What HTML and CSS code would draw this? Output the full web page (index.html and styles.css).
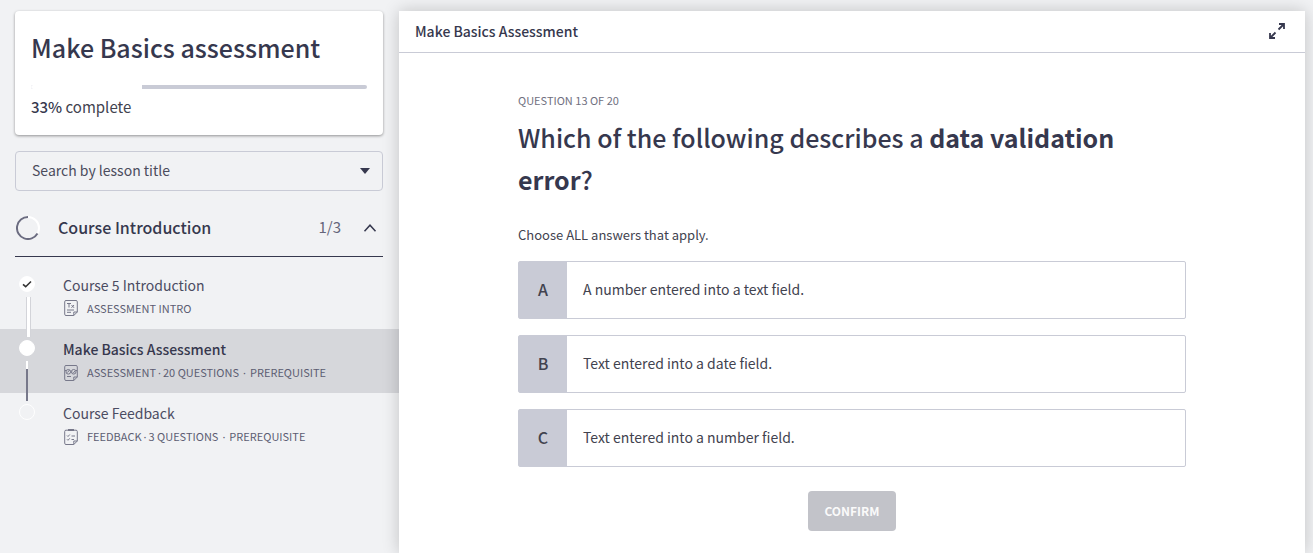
FILE: index.html
```html
<!DOCTYPE html>
<html lang="en">
<head>
<meta charset="utf-8">
<title>Make Basics Assessment</title>
<meta name="viewport" content="width=device-width, initial-scale=1">
<link rel="stylesheet" href="styles.css">
</head>
<body>
<div class="layout">
  <aside class="sidebar">
    <section class="course-card">
      <h1 class="course-title">Make Basics assessment</h1>
      <progress class="course-progress" id="course-progress" max="100" value="33"></progress>
      <label class="course-status" for="course-progress"><strong>33%</strong> complete</label>
    </section>

    <div class="search">
      <select class="search-select" aria-label="Search by lesson title">
        <option>Search by lesson title</option>
      </select>
      <svg class="search-caret" viewBox="0 0 10 6" aria-hidden="true"><path d="M0 0h10L5 6z"/></svg>
    </div>

    <button class="section-toggle" type="button" aria-expanded="true">
      <svg class="ring" viewBox="0 0 24 24" aria-hidden="true">
        <circle class="ring-track" cx="12" cy="12" r="11"/>
        <path class="ring-value" d="M12 1A11 11 0 1 0 21.500 17.500"/>
      </svg>
      <span class="section-title">Course Introduction</span>
      <span class="section-count">1/3</span>
      <svg class="chevron" viewBox="0 0 14 8" aria-hidden="true"><path d="M1.500 7.200L7 1.200l5.500 6"/></svg>
    </button>

    <ul class="lessons">
      <li class="lesson lesson-done">
        <span class="dot"><svg viewBox="0 0 14 14" aria-hidden="true"><path d="M3 7.300l2.700 2.400L11 4.500"/></svg></span>
        <a class="lesson-link" href="#intro">
          <span class="lesson-title">Course 5 Introduction</span>
          <span class="lesson-meta">
            <svg class="doc" viewBox="0 0 14 16" aria-hidden="true"><path d="M2 .5h10a1.300 1.300 0 0 1 1.300 1.300V12l-3.500 3.500H2A1.300 1.300 0 0 1 .7 14.200V1.800A1.300 1.300 0 0 1 2 .5zM13.300 12H9.800v3.500M3 3.500h4M5 3.500v4M7.500 5l2.500 2.800M10 5L7.500 7.800M3 10h7M3 12.300h4"/></svg>
            <span>ASSESSMENT INTRO</span>
          </span>
        </a>
      </li>
      <li class="lesson lesson-current">
        <span class="dot"></span>
        <a class="lesson-link" href="#assessment" aria-current="page">
          <span class="lesson-title">Make Basics Assessment</span>
          <span class="lesson-meta">
            <svg class="doc" viewBox="0 0 14 16" aria-hidden="true"><path d="M2 .5h10a1.300 1.300 0 0 1 1.300 1.300V12l-3.500 3.500H2A1.300 1.300 0 0 1 .7 14.200V1.800A1.300 1.300 0 0 1 2 .5zM13.300 12H9.800v3.500M1 5.500h1M12 5.500h1M3 11.500h4M3.500 7.500l2-2.500M8.600 7l1 .8 1.500-2"/><circle cx="4.300" cy="6.800" r="2.300"/><circle cx="9.700" cy="6.800" r="2.300"/></svg>
            <span>ASSESSMENT<span class="sep">·</span>20 QUESTIONS<span class="sep sep-wide">·</span>PREREQUISITE</span>
          </span>
        </a>
      </li>
      <li class="lesson lesson-next">
        <span class="dot"></span>
        <a class="lesson-link" href="#feedback">
          <span class="lesson-title">Course Feedback</span>
          <span class="lesson-meta">
            <svg class="doc" viewBox="0 0 14 16" aria-hidden="true"><path d="M2 1.200h10a1.300 1.300 0 0 1 1.300 1.300V12l-3.500 3.500H2A1.300 1.300 0 0 1 .7 14.200V2.500A1.300 1.300 0 0 1 2 1.200zM13.300 12H9.800v3.500M3 6.500l1 1 1.800-2M7.500 7H11M3 10.300l1 1 1.800-2M7.500 10.500H10"/><path class="doc-clip" d="M4 0h6v2H4z"/></svg>
            <span>FEEDBACK<span class="sep">·</span>3 QUESTIONS<span class="sep sep-wide">·</span>PREREQUISITE</span>
          </span>
        </a>
      </li>
    </ul>
  </aside>

  <main class="panel">
    <header class="panel-header">
      <h2 class="panel-title">Make Basics Assessment</h2>
      <button class="expand" type="button" aria-label="Expand">
        <svg viewBox="0 0 16 16" aria-hidden="true"><path d="M9.500 6.500L15 1M10 1h5v5M6.500 9.500L1 15M1 10v5h5"/></svg>
      </button>
    </header>
    <form class="quiz">
      <p class="quiz-step">QUESTION 13 OF 20</p>
      <h3 class="quiz-question">Which of the following describes a <strong>data validation error</strong>?</h3>
      <p class="quiz-hint">Choose ALL answers that apply.</p>
      <div class="answers">
        <label class="answer"><input class="answer-box" type="checkbox" name="answer" value="a"><span class="answer-letter">A</span><span class="answer-text">A number entered into a text field.</span></label>
        <label class="answer"><input class="answer-box" type="checkbox" name="answer" value="b"><span class="answer-letter">B</span><span class="answer-text">Text entered into a date field.</span></label>
        <label class="answer"><input class="answer-box" type="checkbox" name="answer" value="c"><span class="answer-letter">C</span><span class="answer-text">Text entered into a number field.</span></label>
      </div>
      <button class="confirm" type="button" disabled>CONFIRM</button>
    </form>
  </main>
</div>
</body>
</html>
```

FILE: styles.css
```css
:root {
  --ink: #36384e;
  --muted: #64657a;
  --line: #c9cbd6;
  --page: #f1f2f4;
}

* { box-sizing: border-box; }

body {
  margin: 0;
  background: var(--page);
  color: var(--ink);
  font-family: "Noto Sans CJK SC", "Noto Sans", sans-serif;
  font-size: 14px;
  line-height: 24px;
}

h1, h2, h3, p, ul { margin: 0; padding: 0; }

button, select, input { font: inherit; color: inherit; margin: 0; }

.layout {
  display: flex;
  min-height: 100vh;
  padding: 11px 8px 0 0;
}

/* Sidebar */
.sidebar {
  flex: 0 0 399px;
  display: flex;
  flex-direction: column;
}

.course-card {
  display: flex;
  flex-direction: column;
  margin: 0 16px 16px 15px;
  padding: 16px;
  background: #fff;
  border-radius: 4px;
  box-shadow: 0 1px 3px rgba(0, 0, 0, .4);
}

.course-title {
  font-size: 25px;
  font-weight: 500;
  line-height: 40px;
}

.course-progress {
  appearance: none;
  width: 100%;
  height: 4px;
  margin: 18px 0 6px;
  border: 0;
  border-radius: 2px;
  overflow: hidden;
  background: var(--line);
}
.course-progress::-webkit-progress-bar { background: var(--line); }
.course-progress::-webkit-progress-value { background: #fff; }

.course-status { color: #42434f; font-size: 15px; }
.course-status strong { color: var(--ink); font-weight: 500; }

.search {
  display: grid;
  align-items: center;
  margin: 0 16px 0 15px;
}
.search-select, .search-caret { grid-area: 1 / 1; }
.search-select {
  appearance: none;
  width: 100%;
  height: 40px;
  padding: 0 32px 2px 16px;
  border: 1px solid var(--line);
  border-radius: 4px;
  background: transparent;
  color: #4b4c5c;
}
.search-caret {
  justify-self: end;
  width: 10px;
  height: 6px;
  margin-right: 13px;
  fill: var(--ink);
  pointer-events: none;
}

.section-toggle {
  display: flex;
  align-items: center;
  height: 66px;
  margin: 0 16px 8px 15px;
  padding: 8px 6px 0 0;
  border: 0;
  border-bottom: 1px solid var(--ink);
  background: none;
  text-align: left;
}
.ring { width: 24px; height: 24px; margin: 0 18px 0 1px; fill: none; stroke-width: 2; }
.ring-track { stroke: #fff; }
.ring-value { stroke: #6b6c80; }
.section-title { flex: 1; font-size: 16px; font-weight: 500; }
.section-count { margin-right: 22px; color: var(--muted); font-size: 15px; }
.section-title, .section-count { padding-bottom: 2px; }
.chevron { width: 14px; height: 8px; fill: none; stroke: var(--ink); stroke-width: 1.500; }

.lessons { list-style: none; }
.lesson {
  position: relative;
  display: flex;
  height: 64px;
  padding: 11px 16px 0 19px;
}
.lesson-current { background: #d6d7db; }
.lesson-link {
  display: flex;
  flex-direction: column;
  gap: 2px;
  margin-left: 28px;
  color: #4b4c62;
  text-decoration: none;
}
.lesson-title { line-height: 18px; }
.lesson-current .lesson-title { color: var(--ink); font-weight: 500; }
.lesson-meta {
  display: flex;
  align-items: center;
  color: #5c5d72;
  font-size: 11px;
  line-height: 24px;
  white-space: nowrap;
}
.sep { margin: 0 2px; font-family: "Noto Sans", sans-serif; }
.sep-wide { margin: 0 4px; }
.doc { width: 14px; height: 16px; margin: 0 9px 0 1px; fill: none; stroke: #77788a; stroke-width: 1; }
.doc .doc-clip { fill: #77788a; stroke: none; }

.dot {
  flex: 0 0 16px;
  height: 16px;
  border: 1px solid #fff;
  border-radius: 50%;
  background: #fff;
}
.dot svg { display: block; width: 14px; height: 14px; fill: none; stroke: #333; stroke-width: 1.600; }
.lesson-next .dot { background: transparent; }

/* Connector running from one dot to the next */
.lesson-done::after, .lesson-current::after {
  content: "";
  position: absolute;
  z-index: 1;
  top: 32px;
  left: 26px;
  width: 3px;
  height: 40px;
}
.lesson-done::after { border: solid #d3d4d9; border-width: 0 1px; background: #fff; }
.lesson-current::after { width: 2px; background: linear-gradient(#fff 8px, #77788a 8px); }

/* Panel */
.panel {
  position: relative;
  z-index: 2;
  flex: 1;
  min-width: 0;
  background: #fff;
  box-shadow: 0 0 16px rgba(0, 0, 0, .2);
}
.panel-header {
  display: flex;
  align-items: center;
  justify-content: space-between;
  height: 42px;
  padding: 0 20px 0 16px;
  border-bottom: 1px solid var(--line);
}
.panel-title { padding-bottom: 2px; font-size: 14px; font-weight: 500; }
.expand { display: flex; padding: 0 0 2px; border: 0; background: none; }
.expand svg { width: 16px; height: 16px; fill: none; stroke: var(--ink); stroke-width: 1.800; }

.quiz {
  display: flex;
  flex-direction: column;
  max-width: 700px;
  margin: 0 auto;
  padding: 39px 16px 22px;
}
.quiz-step { color: #6f7080; font-size: 11px; line-height: 16px; }
.quiz-question {
  margin-top: 8px;
  font-size: 25px;
  font-weight: 500;
  line-height: 42px;
}
.quiz-question strong { font-weight: 700; }
.quiz-hint { margin: 23px 0 14px; color: #42434f; font-size: 13px; }

.answers { display: grid; gap: 16px; }
.answer {
  display: grid;
  grid-template-columns: 48px 1fr;
  align-items: center;
  min-height: 58px;
  border: 1px solid var(--line);
  border-radius: 2px;
}
.answer-box {
  appearance: none;
  grid-area: 1 / 1;
  align-self: stretch;
  background: var(--line);
}
.answer-letter { grid-area: 1 / 1; text-align: center; font-size: 16px; font-weight: 500; }
.answer-letter, .answer-text { padding-bottom: 2px; color: #42434f; }
.answer-text { padding-left: 16px; padding-right: 16px; }

.confirm {
  align-self: center;
  height: 40px;
  margin-top: 24px;
  padding: 0 16px;
  border: 0;
  border-radius: 4px;
  background: #c2c3c9;
  color: #fafafa;
  font-size: 12px;
  font-weight: 700;
}
```
